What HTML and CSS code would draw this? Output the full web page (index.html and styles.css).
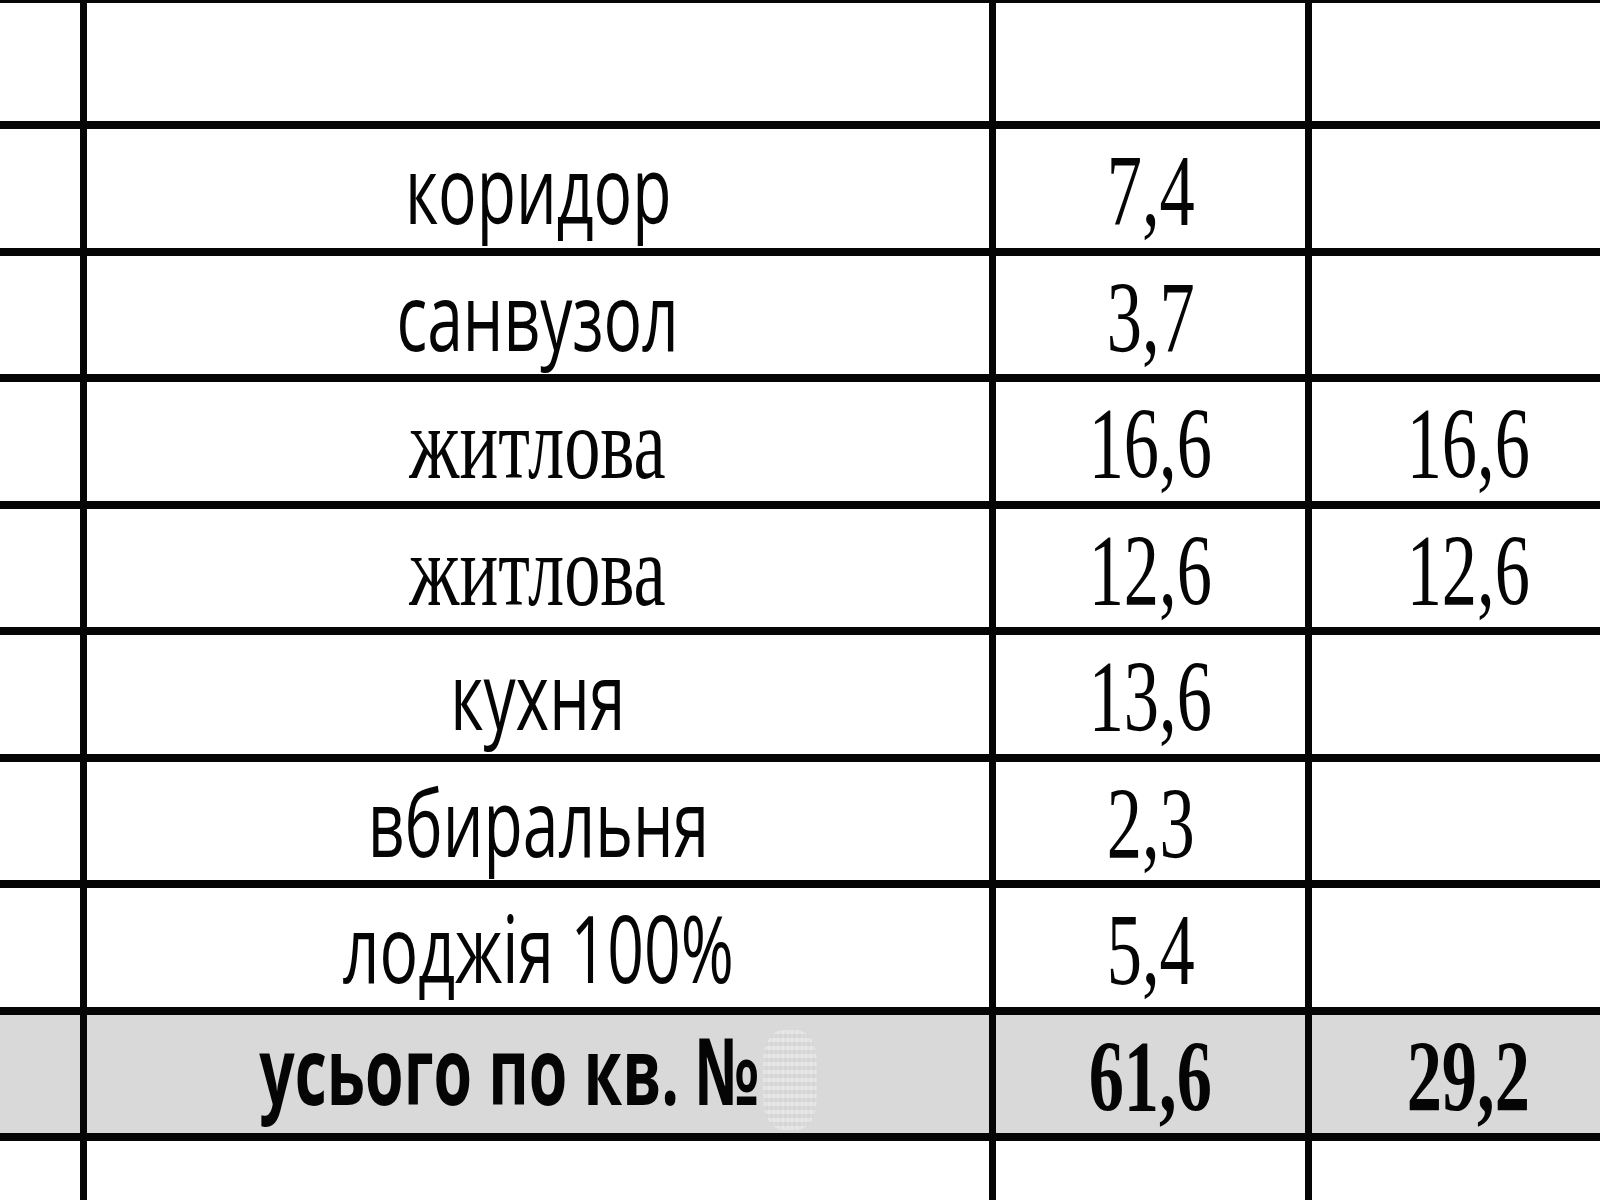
FILE: index.html
```html
<!DOCTYPE html>
<html lang="uk">
<head>
<meta charset="utf-8">
<title>Експлікація</title>
<link rel="stylesheet" href="styles.css">
</head>
<body>
<div class="sheet">
  <div class="row">
    <div class="cell"></div><div class="cell"></div><div class="cell"></div><div class="cell"></div>
  </div>
  <div class="row">
    <div class="cell"></div>
    <div class="cell name"><span class="t sans">коридор</span></div>
    <div class="cell num"><span class="t serif">7,4</span></div>
    <div class="cell num"></div>
  </div>
  <div class="row">
    <div class="cell"></div>
    <div class="cell name"><span class="t sans">санвузол</span></div>
    <div class="cell num"><span class="t serif">3,7</span></div>
    <div class="cell num"></div>
  </div>
  <div class="row">
    <div class="cell"></div>
    <div class="cell name"><span class="t serif label">житлова</span></div>
    <div class="cell num"><span class="t serif">16,6</span></div>
    <div class="cell num"><span class="t serif">16,6</span></div>
  </div>
  <div class="row">
    <div class="cell"></div>
    <div class="cell name"><span class="t serif label">житлова</span></div>
    <div class="cell num"><span class="t serif">12,6</span></div>
    <div class="cell num"><span class="t serif">12,6</span></div>
  </div>
  <div class="row">
    <div class="cell"></div>
    <div class="cell name"><span class="t sans">кухня</span></div>
    <div class="cell num"><span class="t serif">13,6</span></div>
    <div class="cell num"></div>
  </div>
  <div class="row">
    <div class="cell"></div>
    <div class="cell name"><span class="t sans">вбиральня</span></div>
    <div class="cell num"><span class="t serif">2,3</span></div>
    <div class="cell num"></div>
  </div>
  <div class="row">
    <div class="cell"></div>
    <div class="cell name"><span class="t sans">лоджія 100%</span></div>
    <div class="cell num"><span class="t serif">5,4</span></div>
    <div class="cell num"></div>
  </div>
  <div class="row total">
    <div class="cell"></div>
    <div class="cell name"><span class="t sans bold">усього по кв. №<span class="ghost"></span></span></div>
    <div class="cell num"><span class="t serif bold">61,6</span></div>
    <div class="cell num"><span class="t serif bold">29,2</span></div>
  </div>
  <div class="row">
    <div class="cell"></div><div class="cell"></div><div class="cell"></div><div class="cell"></div>
  </div>
</div>
</body>
</html>
```

FILE: styles.css
```css
html, body {
  margin: 0;
  padding: 0;
  background: #fff;
  overflow: hidden;
  width: 1600px;
  height: 1200px;
}

.sheet {
  width: 1624px;
  height: 1200px;
  box-sizing: border-box;
  display: grid;
  grid-template-columns: 80px 902px 309px 312px;
  grid-template-rows: 118px repeat(8, 118.5px) 1fr;
  column-gap: 7px;
  row-gap: 8px;
  padding-top: 3px;
  background: #050505;
  color: #050505;
}

.row {
  display: contents;
}

.cell {
  background: #fff;
  display: flex;
  align-items: center;
  justify-content: center;
  white-space: nowrap;
}

.total .cell {
  background: #d9d9d9;
}

.t {
  display: inline-block;
  line-height: 1.1;
}

.sans {
  font-family: "Open Sans", "Noto Sans", sans-serif;
  font-size: 93px;
  font-weight: 500;
  transform: scaleX(0.69);
}

.sans.bold {
  font-weight: 700;
  transform: scaleX(0.67);
}

.serif {
  font-family: "Liberation Serif", "DejaVu Serif", serif;
  font-size: 102px;
  transform: scaleX(0.69);
  padding-top: 6px;
}

.serif.label {
  transform: scaleX(0.71);
}

.bold {
  font-weight: 700;
}

.ghost {
  display: inline-block;
  width: 80px;
  height: 100px;
  margin-left: 6px;
  vertical-align: middle;
  border-radius: 30px;
  background:
    repeating-linear-gradient(0deg, rgba(255, 255, 255, 0.35) 0 4px, rgba(200, 200, 200, 0.25) 4px 8px),
    repeating-linear-gradient(90deg, rgba(255, 255, 255, 0.3) 0 3px, transparent 3px 7px);
  opacity: 0.7;
}
```
